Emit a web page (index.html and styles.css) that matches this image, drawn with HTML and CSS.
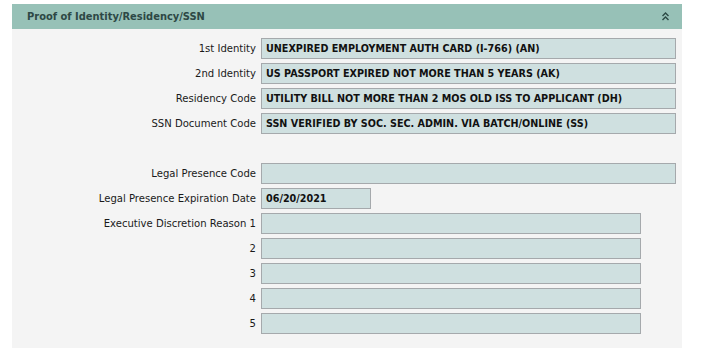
FILE: index.html
```html
<!DOCTYPE html>
<html lang="en">

<head>
    <meta charset="UTF-8">
    <meta name="viewport" content="width=device-width, initial-scale=1.0">
    <title>Proof of Identity/Residency/SSN</title>
    <link rel="stylesheet" href="styles.css">
</head>

<body>
    <div class="panel">
        <div class="panel-header">
            <span class="panel-title">Proof of Identity/Residency/SSN</span>
            <svg class="collapse" width="7" height="9" viewBox="0 0 7 9">
                <path d="M0.5 4 L3.5 1 L6.5 4 M0.5 8 L3.5 5 L6.5 8" fill="none" stroke="#2c4a45" stroke-width="1.4" />
            </svg>
        </div>
        <div class="panel-body">
            <!-- Identity documents -->
            <label class="label">1st Identity</label>
            <div class="field">UNEXPIRED EMPLOYMENT AUTH CARD (I-766) (AN)</div>

            <label class="label">2nd Identity</label>
            <div class="field">US PASSPORT EXPIRED NOT MORE THAN 5 YEARS (AK)</div>

            <label class="label">Residency Code</label>
            <div class="field">UTILITY BILL NOT MORE THAN 2 MOS OLD ISS TO APPLICANT (DH)</div>

            <label class="label">SSN Document Code</label>
            <div class="field">SSN VERIFIED BY SOC. SEC. ADMIN. VIA BATCH/ONLINE (SS)</div>

            <div class="spacer"></div>

            <!-- Legal presence -->
            <label class="label">Legal Presence Code</label>
            <div class="field"></div>

            <label class="label">Legal Presence Expiration Date</label>
            <div class="field date">06/20/2021</div>

            <label class="label">Executive Discretion Reason 1</label>
            <div class="field short"></div>

            <label class="label">2</label>
            <div class="field short"></div>

            <label class="label">3</label>
            <div class="field short"></div>

            <label class="label">4</label>
            <div class="field short"></div>

            <label class="label">5</label>
            <div class="field short"></div>
        </div>
    </div>
</body>

</html>
```

FILE: styles.css
```css
/* Basic Reset */
* {
    box-sizing: border-box;
    margin: 0;
    padding: 0;
    font-family: 'DejaVu Sans Condensed', 'DejaVu Sans', sans-serif;
}

body {
    background-color: #ffffff;
    color: #1a1a1a;
    padding: 4px 33px 0 12px;
}

/* Panel */
.panel {
    width: 670px;
    background-color: #f4f4f4;
}

.panel-header {
    display: flex;
    align-items: center;
    justify-content: space-between;
    height: 25px;
    padding: 0 13px 0 15px;
    background-color: #97c1b7;
}

.panel-title {
    font-size: 11px;
    font-weight: bold;
    color: #2d4845;
}

.collapse {
    display: block;
    margin-top: -1px;
}

/* Form grid */
.panel-body {
    display: grid;
    grid-template-columns: 244px 1fr;
    column-gap: 5px;
    row-gap: 4px;
    padding: 9px 6px 14px 0;
}

.label {
    font-size: 11.2px;
    color: #1a1a1a;
    text-align: right;
    line-height: 21px;
}

.field {
    height: 21px;
    line-height: 19px;
    padding: 0 4px;
    background-color: #cfe0e0;
    border: 1px solid #a5a9ac;
    font-size: 10.7px;
    font-weight: bold;
    color: #111111;
    white-space: nowrap;
}

.field.date {
    width: 110px;
}

.field.short {
    width: 380px;
}

.spacer {
    grid-column: span 2;
    height: 21px;
}
```
